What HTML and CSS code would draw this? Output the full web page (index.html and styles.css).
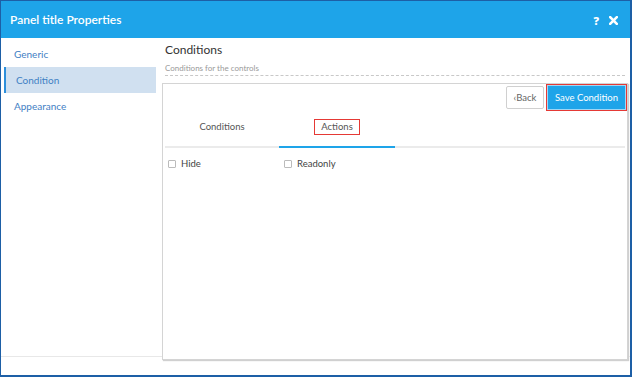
FILE: index.html
```html
<!DOCTYPE html>
<html>
<head>
	<title>Panel title Properties</title>
	<meta charset="utf-8">
	<link rel="stylesheet" href="styles.css">
</head>
<body>

	<div id="dialog">

		<div id="dialog-header">
			<span id="dialog-title">Panel title Properties</span>
			<div id="header-tools">
				<span class="tool-help">?</span>
				<svg class="tool-close" width="9" height="9" viewBox="0 0 9 9">
					<path d="M1.2 1.2 L7.8 7.8 M7.8 1.2 L1.2 7.8" stroke="#fff" stroke-width="2.6" stroke-linecap="square"/>
				</svg>
			</div>
		</div>

		<div id="dialog-body">

			<ul id="side-nav">
				<li>Generic</li>
				<li class="active">Condition</li>
				<li>Appearance</li>
			</ul>

			<div id="content">
				<div id="content-head">
					<h2>Conditions</h2>
					<p>Conditions for the controls</p>
				</div>

				<div id="panel">
					<div class="panel-actions">
						<button class="btn-back">&lsaquo;Back</button>
						<button class="btn-save">Save Condition</button>
					</div>

					<div class="tabs">
						<div class="tab">Conditions</div>
						<div class="tab active"><span class="marked">Actions</span></div>
					</div>

					<div class="checks">
						<label class="check"><span class="box"></span>Hide</label>
						<label class="check"><span class="box"></span>Readonly</label>
					</div>
				</div>
			</div>

		</div>

	</div>

</body>
</html>
```

FILE: styles.css
```css
* {
	margin: 0;
	padding: 0;
	box-sizing: border-box;
}

body {
	font-family: Lato, "Open Sans", sans-serif;
	background-color: white;
}

#dialog {
	width: 632px;
	height: 377px;
	border-style: solid;
	border-color: #1d5fa6;
	border-width: 1px 2px 2px 1px;
	background-color: white;
}



	#dialog-header {
		display: flex;
		align-items: center;
		justify-content: space-between;
		height: 37px;
		padding: 0 12px 1px 9px;
		background-color: #1ea4e9;
		color: white;
	}

		#dialog-title {
			font-size: 12px;
			font-weight: 600;
		}

		#header-tools {
			display: flex;
			align-items: center;
			gap: 10px;
			padding-top: 3px;
		}

			.tool-help {
				font-family: "Open Sans", sans-serif;
				font-size: 11px;
				font-weight: 800;
			}



	#dialog-body {
		display: flex;
		height: 319px;
		border-bottom: 1px solid #e8e8e8;
	}

		#side-nav {
			list-style: none;
			width: 155px;
			padding-top: 3px;
		}

			#side-nav li {
				height: 26px;
				line-height: 26px;
				margin-left: 3px;
				padding-left: 10px;
				font-size: 10px;
				color: #3f80c4;
			}

			#side-nav li.active {
				background-color: #d0e0f0;
				border-left: 2px solid #2d8fdb;
			}

		#content {
			width: 466px;
			margin-left: 6px;
		}

			#content-head {
				margin: 0 3px;
				padding: 4px 0 2px 0;
				border-bottom: 1px dashed #c8c8c8;
			}

				#content-head h2 {
					font-size: 12px;
					font-weight: 400;
					line-height: 16px;
					color: #333;
				}

				#content-head p {
					margin-top: 5px;
					font-size: 8px;
					line-height: 10px;
					color: #999;
				}

			#panel {
				height: 277px;
				margin-top: 7px;
				border: 1px solid #d4d4d4;
				box-shadow: 1px 1px 1px #d0d0d0;
				background-color: white;
			}

				.panel-actions {
					display: flex;
					justify-content: flex-end;
					align-items: flex-start;
					height: 27px;
				}

					.panel-actions button {
						font-family: inherit;
						font-size: 9.5px;
					}

					.btn-back {
						width: 38px;
						height: 23px;
						margin: 2px 2px 0 0;
						border: 1px solid #d0d0d0;
						border-radius: 2px;
						background-color: white;
						color: #666;
					}

					.btn-save {
						width: 81px;
						height: 27px;
						border: 1px solid #e53935;
						box-shadow: inset 0 0 0 1px #9fd6f5;
						background-color: #1ea4e9;
						color: white;
					}

				.tabs {
					display: flex;
					margin: 0 2px;
					border-bottom: 2px solid #ebebeb;
				}

					.tab {
						width: 116px;
						padding: 8px 0 11px 0;
						margin-bottom: -2px;
						border-bottom: 2px solid transparent;
						text-align: center;
						font-size: 9.5px;
						line-height: 16px;
						color: #555;
					}

					.tab:first-child {
						width: 114px;
					}

					.tab.active {
						border-bottom-color: #1ea4e9;
					}

						.marked {
							display: inline-block;
							padding: 0 6px;
							line-height: 14px;
							border: 1px solid #e53935;
						}

				.checks {
					display: flex;
					padding: 8px 0 0 5px;
				}

					.check {
						display: flex;
						align-items: center;
						gap: 5px;
						width: 116px;
						font-size: 9.5px;
						line-height: 16px;
						color: #444;
					}

						.box {
							width: 8px;
							height: 8px;
							border: 1px solid #bbb;
							border-radius: 1px;
						}
```
